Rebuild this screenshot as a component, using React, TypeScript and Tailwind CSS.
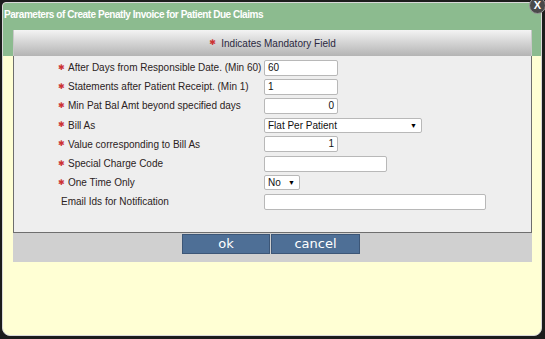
import React from 'react'

const rows = [
    { label: "After Days from Responsible Date. (Min 60)", req: true, kind: "input", w: "w-[74px]", value: "60", align: "left" },
    { label: "Statements after Patient Receipt. (Min 1)", req: true, kind: "input", w: "w-[74px]", value: "1", align: "left" },
    { label: "Min Pat Bal Amt beyond specified days", req: true, kind: "input", w: "w-[74px]", value: "0", align: "right" },
    { label: "Bill As", req: true, kind: "select", w: "w-[158px]", value: "Flat Per Patient" },
    { label: "Value corresponding to Bill As", req: true, kind: "input", w: "w-[74px]", value: "1", align: "right" },
    { label: "Special Charge Code", req: true, kind: "input", w: "w-[123px]", value: "", align: "left" },
    { label: "One Time Only", req: true, kind: "select", w: "w-[36px]", value: "No" },
    { label: "Email Ids for Notification", req: false, kind: "input", w: "w-[222px]", value: "", align: "left" },
]

function Star() {
    return <span className="shrink-0 w-[10px] text-[#cc3333] text-[8px] leading-none font-['DejaVu_Sans',sans-serif]">✱</span>
}

export default function App() {
    return (
        <div className="w-[545px] h-[339px] bg-[#1c1c1c] pl-[2px] pr-[3px] pt-[2px] pb-[3px] font-['Liberation_Sans',Arial,sans-serif] relative">
            <div className="h-full border border-[#d8d8d8] rounded-t-[4px] rounded-b-[8px] bg-[#ffffd4] overflow-hidden flex flex-col">
                {/* Green header */}
                <div className="bg-[#8cbb8f] pt-[5px]">
                    <div className="text-white font-bold text-[10px] tracking-[-0.45px] leading-[14px] pl-[1px] h-[22px]">
                        Parameters of Create Penatly Invoice for Patient Due Claims
                    </div>
                    <div className="ml-[10px] mr-[9px] h-[26px] bg-gradient-to-b from-[#f4f4f4] to-[#b4b4b4] border-x border-[#c8c8c8] flex items-center justify-center text-[10px] text-[#2a2840]">
                        <Star />
                        <span className="ml-[2px]">Indicates Mandatory Field</span>
                    </div>
                </div>

                {/* Form panel */}
                <div className="ml-[10px] mr-[9px] bg-[#eeeeee] border border-t-0 border-[#6e6e6e] pt-[2px] pb-[20px] pl-[44px]">
                    {rows.map((row, i) => (
                        <div key={i} className="flex items-center h-[19.2px]">
                            <div className="w-[206px] shrink-0 flex items-center text-[10px] text-[#2b2222] whitespace-nowrap">
                                {row.req ? <Star /> : <span className="shrink-0 w-[3px]" />}
                                <span>{row.label}</span>
                            </div>
                            {row.kind === "input" ? (
                                <div className={`${row.w} h-[16px] bg-white border border-[#b8b8b8] rounded-[2px] text-[10px] text-[#111] px-[3px] leading-[14px] ${row.align === "right" ? "text-right" : "text-left"}`}>
                                    {row.value}
                                </div>
                            ) : (
                                <div className={`${row.w} h-[15px] bg-white border border-[#b8b8b8] rounded-[2px] text-[10px] text-[#111] pl-[3px] pr-[4px] leading-[13px] flex items-center justify-between`}>
                                    <span>{row.value}</span>
                                    <span className="text-[7px] text-black">▼</span>
                                </div>
                            )}
                        </div>
                    ))}
                </div>

                {/* Button bar */}
                <div className="ml-[10px] mr-[9px] h-[29px] bg-[#d0d0d0] flex pl-[169px] pt-[1px]">
                    <button className="w-[88px] h-[20px] bg-[#4e6f96] border border-[#3c5677] text-white text-[13px] leading-none font-['DejaVu_Sans',sans-serif]">ok</button>
                    <button className="ml-[1px] w-[89px] h-[20px] bg-[#4e6f96] border border-[#3c5677] text-white text-[13px] leading-none font-['DejaVu_Sans',sans-serif]">cancel</button>
                </div>
            </div>

            {/* Close button */}
            <div className="absolute right-[-1px] top-[-3px] w-[17px] h-[17px] rounded-full bg-[#4a4a4a] border border-[#999] flex items-center justify-center text-white font-bold text-[11px] leading-none">
                X
            </div>
        </div>
    )
}
